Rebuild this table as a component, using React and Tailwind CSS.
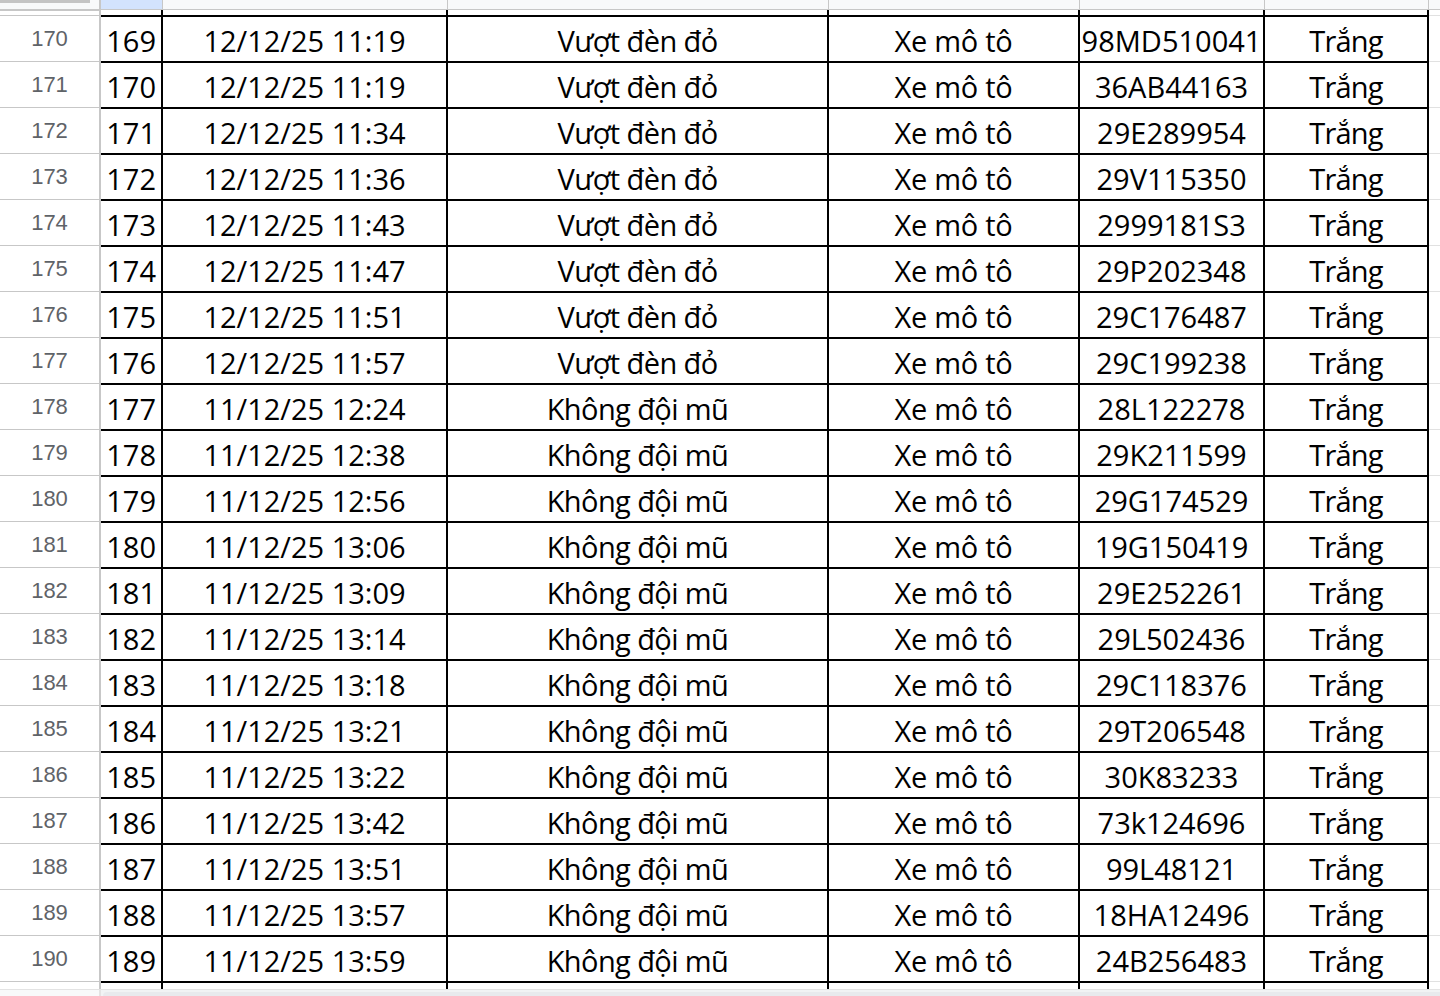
import React from 'react';

const rows = [
  [170, 169, '12/12/25 11:19', 'Vượt đèn đỏ', '98MD510041'],
  [171, 170, '12/12/25 11:19', 'Vượt đèn đỏ', '36AB44163'],
  [172, 171, '12/12/25 11:34', 'Vượt đèn đỏ', '29E289954'],
  [173, 172, '12/12/25 11:36', 'Vượt đèn đỏ', '29V115350'],
  [174, 173, '12/12/25 11:43', 'Vượt đèn đỏ', '2999181S3'],
  [175, 174, '12/12/25 11:47', 'Vượt đèn đỏ', '29P202348'],
  [176, 175, '12/12/25 11:51', 'Vượt đèn đỏ', '29C176487'],
  [177, 176, '12/12/25 11:57', 'Vượt đèn đỏ', '29C199238'],
  [178, 177, '11/12/25 12:24', 'Không đội mũ', '28L122278'],
  [179, 178, '11/12/25 12:38', 'Không đội mũ', '29K211599'],
  [180, 179, '11/12/25 12:56', 'Không đội mũ', '29G174529'],
  [181, 180, '11/12/25 13:06', 'Không đội mũ', '19G150419'],
  [182, 181, '11/12/25 13:09', 'Không đội mũ', '29E252261'],
  [183, 182, '11/12/25 13:14', 'Không đội mũ', '29L502436'],
  [184, 183, '11/12/25 13:18', 'Không đội mũ', '29C118376'],
  [185, 184, '11/12/25 13:21', 'Không đội mũ', '29T206548'],
  [186, 185, '11/12/25 13:22', 'Không đội mũ', '30K83233'],
  [187, 186, '11/12/25 13:42', 'Không đội mũ', '73k124696'],
  [188, 187, '11/12/25 13:51', 'Không đội mũ', '99L48121'],
  [189, 188, '11/12/25 13:57', 'Không đội mũ', '18HA12496'],
  [190, 189, '11/12/25 13:59', 'Không đội mũ', '24B256483'],
];

const cell = 'shrink-0 border-t-2 border-r-2 border-black flex items-end pb-[6px] leading-none';

const Row = ({ r }) => (
  <div className="flex h-[46px] shrink-0">
    {/* row header */}
    <div className="w-[101px] shrink-0 border-t border-r-2 border-[#c7c7c7] flex items-center justify-center font-['Liberation_Sans',sans-serif] text-[22px] text-[#5f6368]">
      {r[0]}
    </div>
    <div className={`${cell} w-[62px] justify-end pr-[5px]`}>{r[1]}</div>
    <div className={`${cell} w-[285px] justify-center`}>{r[2]}</div>
    <div className={`${cell} w-[381px] justify-center tracking-[-0.6px]`}>{r[3]}</div>
    <div className={`${cell} w-[251px] justify-center tracking-[-0.3px]`}>Xe mô tô</div>
    <div className={`${cell} w-[185px] justify-center whitespace-nowrap`}>{r[4]}</div>
    <div className={`${cell} w-[164px] justify-center tracking-[-0.8px]`}>Trắng</div>
    <div className="flex-1 border-t border-[#e1e1e1]" />
  </div>
);

// partial row, only borders show
const Stub = ({ h }) => (
  <div className={`flex shrink-0 overflow-hidden ${h}`}>
    <div className="w-[101px] shrink-0 border-t border-r-2 border-[#c7c7c7]" />
    <div className="w-[62px] shrink-0 border-r-2 border-black" />
    <div className="w-[285px] shrink-0 border-r-2 border-black" />
    <div className="w-[381px] shrink-0 border-r-2 border-black" />
    <div className="w-[251px] shrink-0 border-r-2 border-black" />
    <div className="w-[185px] shrink-0 border-r-2 border-black" />
    <div className="w-[164px] shrink-0 border-r-2 border-black" />
    <div className="flex-1" />
  </div>
);

export default function App() {
  return (
    <div className="w-[1440px] h-[996px] overflow-hidden bg-white flex flex-col font-['Open_Sans',sans-serif] text-[29px] text-black">
      {/* column header band (mostly scrolled off) */}
      <div className="flex h-[10px] shrink-0 border-b border-[#c7c7c7]">
        <div className="w-[101px] shrink-0 bg-[#f8f9fa] border-r-2 border-[#c7c7c7]">
          <div className="w-[90px] h-[3px] bg-[#c4c4c4]" />
        </div>
        <div className="w-[62px] shrink-0 bg-[#d3e3fd] border-r border-[#c7c7c7]" />
        <div className="w-[285px] shrink-0 bg-[#f8f9fa] border-r border-[#c7c7c7]" />
        <div className="w-[381px] shrink-0 bg-[#f8f9fa] border-r border-[#c7c7c7]" />
        <div className="w-[251px] shrink-0 bg-[#f8f9fa] border-r border-[#c7c7c7]" />
        <div className="w-[185px] shrink-0 bg-[#f8f9fa] border-r border-[#c7c7c7]" />
        <div className="w-[164px] shrink-0 bg-[#f8f9fa] border-r border-[#c7c7c7]" />
        <div className="flex-1 bg-[#f8f9fa]" />
      </div>

      <Stub h="h-[5px]" />

      {rows.map((r) => (
        <Row key={r[0]} r={r} />
      ))}

      {/* next row, cut off */}
      <div className="flex h-[8px] shrink-0 overflow-hidden">
        <div className="w-[101px] shrink-0 border-t border-r-2 border-[#c7c7c7]" />
        <div className="w-[1328px] shrink-0 border-t-2 border-black flex">
          <div className="w-[62px] shrink-0 border-r-2 border-black" />
          <div className="w-[285px] shrink-0 border-r-2 border-black" />
          <div className="w-[381px] shrink-0 border-r-2 border-black" />
          <div className="w-[251px] shrink-0 border-r-2 border-black" />
          <div className="w-[185px] shrink-0 border-r-2 border-black" />
          <div className="w-[164px] shrink-0 border-r-2 border-black" />
        </div>
        <div className="flex-1 border-t border-[#e1e1e1]" />
      </div>

      {/* horizontal scrollbar */}
      <div className="flex flex-1 border-t border-[#e3e3e3] bg-[#f1f3f4]">
        <div className="w-[101px] shrink-0 bg-[#f8f9fa] border-r-2 border-[#e3e3e3]" />
        <div className="flex-1 mt-[2px] ml-[2px] rounded-tl-[6px] bg-[#e8eaed]" />
      </div>
    </div>
  );
}
